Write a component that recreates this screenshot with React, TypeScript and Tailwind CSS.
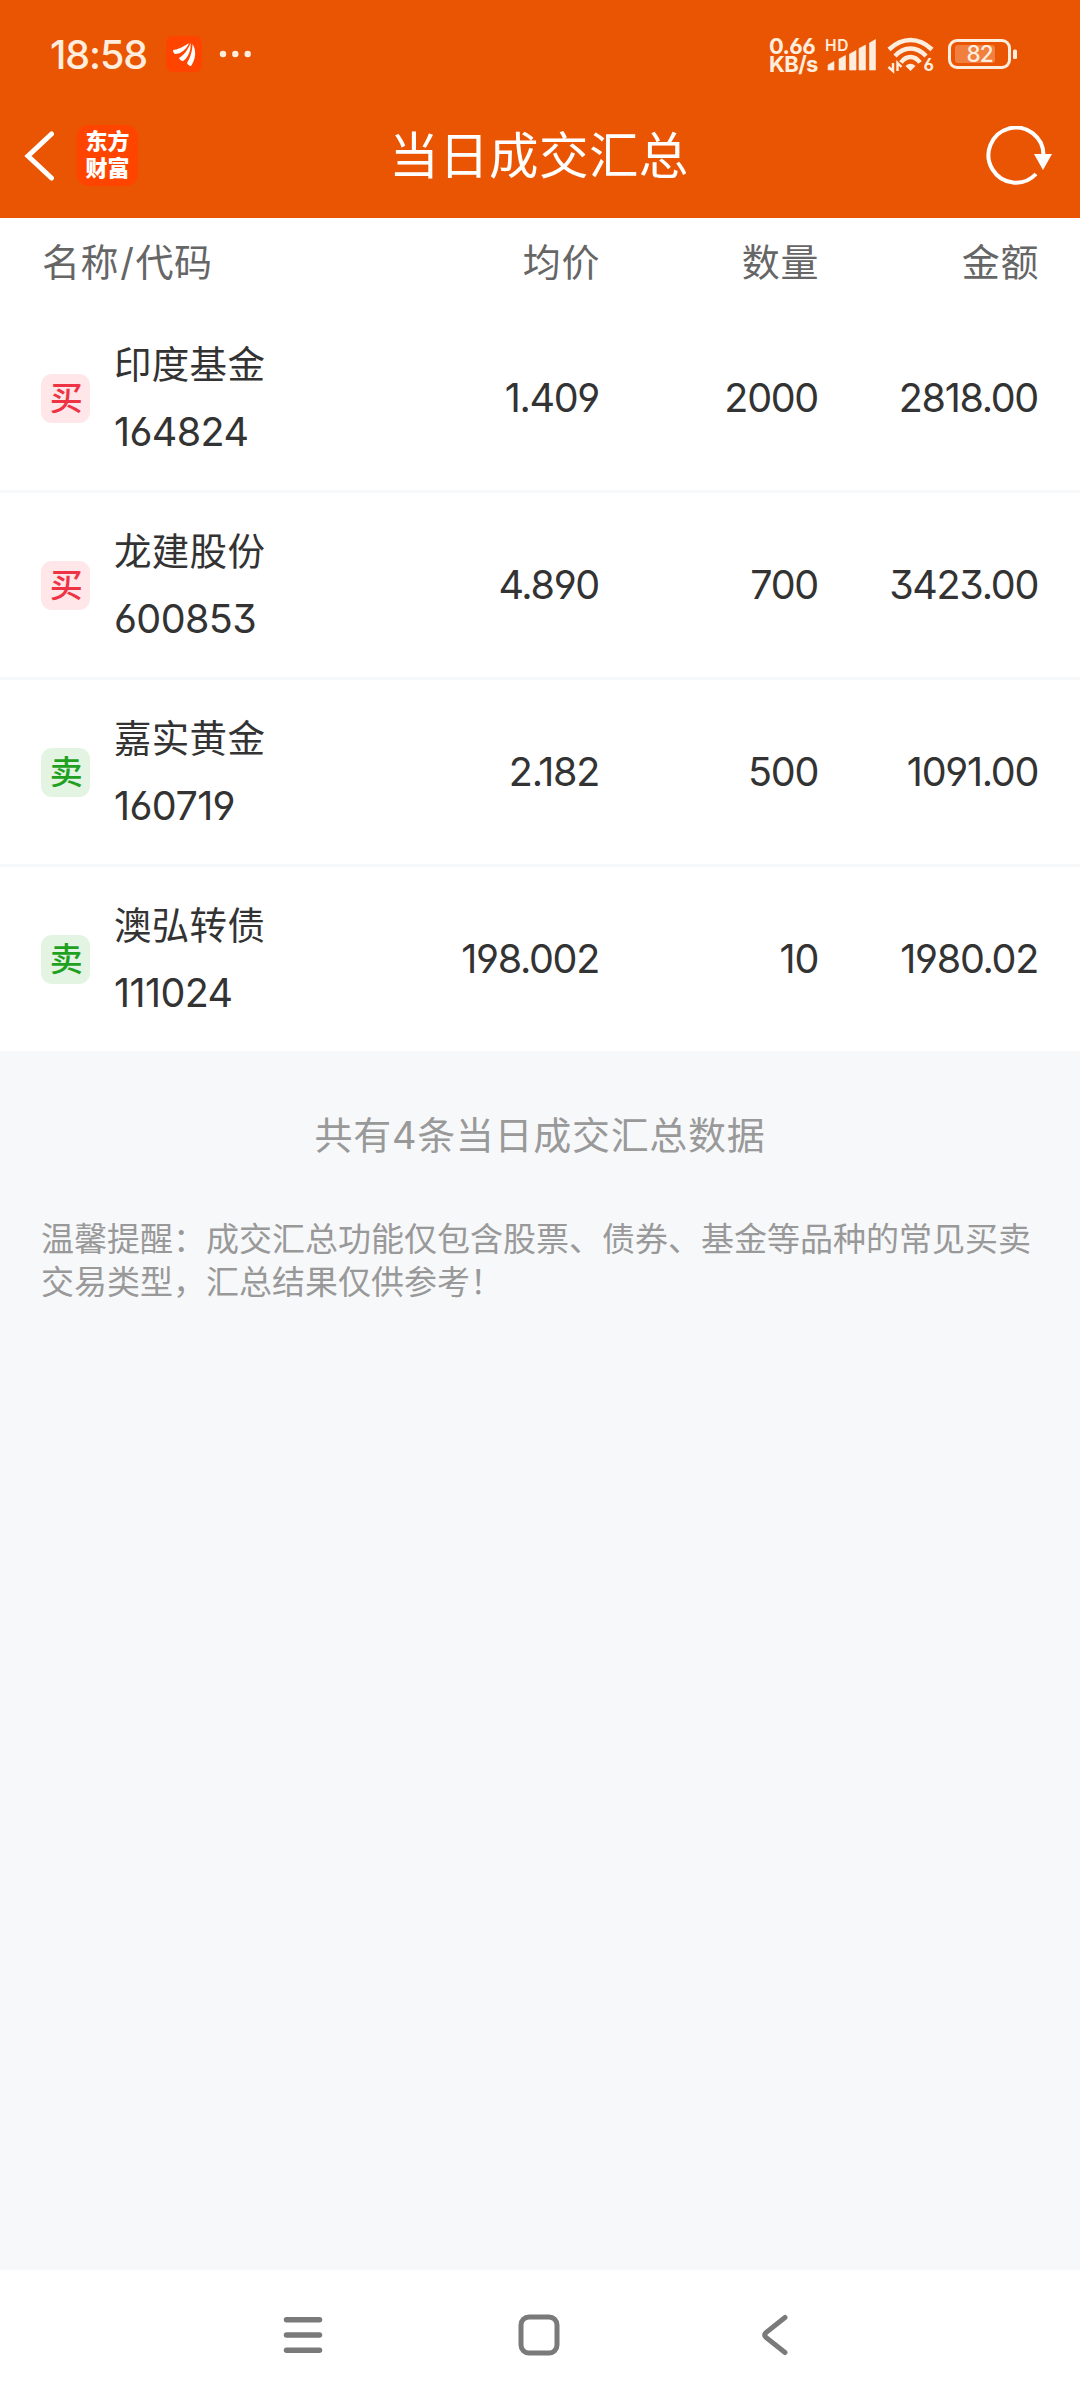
type Side = "buy" | "sell"

interface Deal {
    side: Side
    name: string
    code: string
    price: string
    count: string
    amount: string
}

const deals: Deal[] = [
    { side: "buy", name: "印度基金", code: "164824", price: "1.409", count: "2000", amount: "2818.00" },
    { side: "buy", name: "龙建股份", code: "600853", price: "4.890", count: "700", amount: "3423.00" },
    { side: "sell", name: "嘉实黄金", code: "160719", price: "2.182", count: "500", amount: "1091.00" },
    { side: "sell", name: "澳弘转债", code: "111024", price: "198.002", count: "10", amount: "1980.02" },
]

function StatusBar() {
    return (
        <div className="flex h-[108px] items-center pl-[50px] pr-[62px] text-[#ffeddd]">
            <span className="w-[116px] pt-[3px] text-[39.5px] leading-none font-medium tracking-[-1.1px]">18:58</span>
            <svg className="h-9 w-9" viewBox="0 0 36 36">
                <rect width="36" height="36" rx="7" fill="#ff4400" />
                <path d="M7 14C11 14 17 11 23 7C21 13 15 18 9 18C7.500 17 7 15.500 7 14Z" fill="#fff" />
                <path d="M13 22C17 20 22 14 24.500 7C25.500 14 22 22 17 25C15 25 13.500 23.500 13 22Z" fill="#fff" />
                <path d="M21 27C24 22 26.500 15 26.500 8C30.500 14 30 23 25 30C23 30 21.500 28.500 21 27Z" fill="#fff" />
            </svg>
            <svg className="ml-[17px] h-2 w-[34px]" viewBox="0 0 34 8" fill="currentColor">
                <circle cx="4" cy="4" r="3.200" />
                <circle cx="16.300" cy="4" r="3.200" />
                <circle cx="28.700" cy="4" r="3.200" />
            </svg>

            {/* Network speed */}
            <div className="ml-auto w-[56px] pt-[1px] text-[22px] leading-[18px] font-bold tracking-[-0.6px] whitespace-nowrap">
                <div>0.66</div>
                <div>KB/s</div>
            </div>

            {/* Signal */}
            <svg className="h-9 w-[52px]" viewBox="0 0 52 36" fill="currentColor">
                <text x="0" y="14.500" fontSize="15.500" fontWeight="600" textLength="23.500">HD</text>
                <path d="M3 34V29L9 25.500V34ZM14 34V23L20.500 19.500V34ZM24.500 34V18L31 14.500V34ZM34 34V12.500L40.500 9V34ZM44.500 34V7L50.500 3.500V34Z" stroke="currentColor" strokeWidth="0.600" strokeLinejoin="round" />
            </svg>

            {/* Wi-Fi */}
            <svg className="ml-[10px] h-9 w-[50px] overflow-visible" viewBox="0 0 50 36">
                <g fill="none" stroke="currentColor" strokeWidth="4.500">
                    <path d="M2 13.500Q12 4 23.500 4T45 13.500" />
                    <path d="M8 20Q15 12.500 23.500 12.500T39 20" />
                    <path d="M14 26.500Q18 21 23.500 21T33 26.500" />
                </g>
                <path d="M18.500 30Q23.500 25.500 28.500 30L23.500 35Z" fill="currentColor" />
                <path d="M6 27V35L1.500 31M10.500 35V27L14.500 31" fill="none" stroke="currentColor" strokeWidth="2.400" />
                <text x="36.500" y="35" fontSize="17" fontWeight="700" fill="currentColor">6</text>
            </svg>

            {/* Battery */}
            <svg className="ml-[11px] h-[30px] w-[70px]" viewBox="0 0 70 30">
                <rect x="1.500" y="1.500" width="60" height="27" rx="7.500" fill="none" stroke="currentColor" strokeWidth="3" />
                <rect x="7" y="6" width="40" height="18" rx="3" fill="currentColor" opacity="0.280" />
                <rect x="65" y="10.500" width="4" height="9.500" rx="1.500" fill="currentColor" />
                <text x="32" y="23.300" fontSize="22.500" fontWeight="500" textAnchor="middle" textLength="27" fill="currentColor">82</text>
            </svg>
        </div>
    )
}

function TitleBar() {
    return (
        <div className="flex h-[95px] items-center text-white">
            <div className="flex flex-1 items-center pl-6">
                <svg className="h-[50px] w-[30px]" viewBox="0 0 30 50" fill="none" stroke="currentColor" strokeWidth="5">
                    <path d="M27.500 3L4 25L27.500 47" strokeLinecap="round" />
                </svg>
                <div className="ml-[23px] flex h-[61px] w-[61px] flex-col items-center justify-center rounded-xl bg-[#ff4400] pb-[2px] text-[22px] leading-[27px] font-black">
                    <span>东方</span>
                    <span>财富</span>
                </div>
            </div>
            <h1 className="pt-[2px] text-[49.5px] leading-none tracking-[0.4px]">当日成交汇总</h1>
            <div className="flex flex-1 justify-end pr-[26px]">
                <svg className="h-[60px] w-[68px]" viewBox="0 0 68 60">
                    <path d="M57.500 29A27.500 27.500 0 1 0 50 48" fill="none" stroke="currentColor" strokeWidth="4" />
                    <path d="M48 28H66L57 44Z" fill="currentColor" />
                </svg>
            </div>
        </div>
    )
}

function SideBadge({ side }: { side: Side }) {
    return (
        <span
            className={`flex h-[49px] w-[49px] items-center justify-center rounded-[11px] pt-px text-[33px] leading-none font-medium
            ${side === "buy" ? "bg-[#ffe6e8] text-[#ee3344]" : "bg-[#e3f4e3] text-[#1fa01f]"}`}
        >
            {side === "buy" ? "买" : "卖"}
        </span>
    )
}

function DealRow({ deal }: { deal: Deal }) {
    return (
        <li className="flex h-[187px] items-center border-b-3 border-[#f7f8fa] pr-[42px] pl-[41px] text-[39.5px] leading-none tracking-[-1.3px]">
            <SideBadge side={deal.side} />
            <div className="ml-6 flex-1">
                <div className="text-[37.5px] leading-[67px] tracking-[0.3px]">{deal.name}</div>
                <div className="pt-px leading-[67px] tracking-[-0.6px]">{deal.code}</div>
            </div>
            <span className="w-[220px] pt-[2px] text-right">{deal.price}</span>
            <span className="w-[219px] pt-[2px] text-right">{deal.count}</span>
            <span className="w-[220px] pt-[2px] text-right">{deal.amount}</span>
        </li>
    )
}

function SystemNav() {
    return (
        <nav className="flex h-[130px] items-center justify-center bg-white pr-[2px] text-[#7a7a7a]">
            <div className="flex w-[236px] justify-center">
                <svg className="h-11 w-11" viewBox="0 0 44 44" fill="none" stroke="currentColor" strokeWidth="5.500" strokeLinecap="round">
                    <path d="M5.500 6.700H38.500M5.500 22H38.500M5.500 37.300H38.500" />
                </svg>
            </div>
            <div className="flex w-[236px] justify-center">
                <svg className="h-11 w-11" viewBox="0 0 44 44" fill="none" stroke="currentColor" strokeWidth="5">
                    <rect x="4" y="4" width="36" height="36" rx="8" />
                </svg>
            </div>
            <div className="flex w-[236px] justify-center">
                <svg className="h-11 w-11" viewBox="0 0 44 44" fill="none" stroke="currentColor" strokeWidth="5" strokeLinecap="round">
                    <path d="M32 4.500L13 19.500Q10.500 22 13 24.500L32 39.500" />
                </svg>
            </div>
        </nav>
    )
}

export default function App() {
    return (
        <div className="flex h-[2400px] w-[1080px] flex-col overflow-hidden bg-[#f7f8fa] font-['Inter','Noto_Sans_CJK_SC',sans-serif] text-[#333333] [font-feature-settings:'cv03','cv04','cv09','calt'_0]">
            <header className="h-[218px] bg-[#ea5504]">
                <StatusBar />
                <TitleBar />
            </header>

            <main className="flex-1">
                <div className="flex h-[88px] items-center bg-white pr-[41px] pl-[42px] text-[38px] leading-none tracking-[0.6px] text-[#666666]">
                    <span className="flex-1">
                        名称<span className="mx-[1px]">/</span>代码
                    </span>
                    <span className="w-[220px] text-right">均价</span>
                    <span className="w-[219px] text-right">数量</span>
                    <span className="w-[220px] text-right">金额</span>
                </div>
                <ul className="bg-white">
                    {deals.map((deal) => (
                        <DealRow key={deal.code} deal={deal} />
                    ))}
                </ul>

                <p className="mt-[56px] text-center text-[38px] leading-[50px] tracking-[0.7px] text-[#999999]">共有4条当日成交汇总数据</p>
                <p className="mt-[58px] pr-12 pl-[41px] text-[33px] leading-[43px] text-[#999999]">
                    温馨提醒：成交汇总功能仅包含股票、债券、基金等品种的常见买卖交易类型，汇总结果仅供参考！
                </p>
            </main>

            <SystemNav />
        </div>
    )
}
